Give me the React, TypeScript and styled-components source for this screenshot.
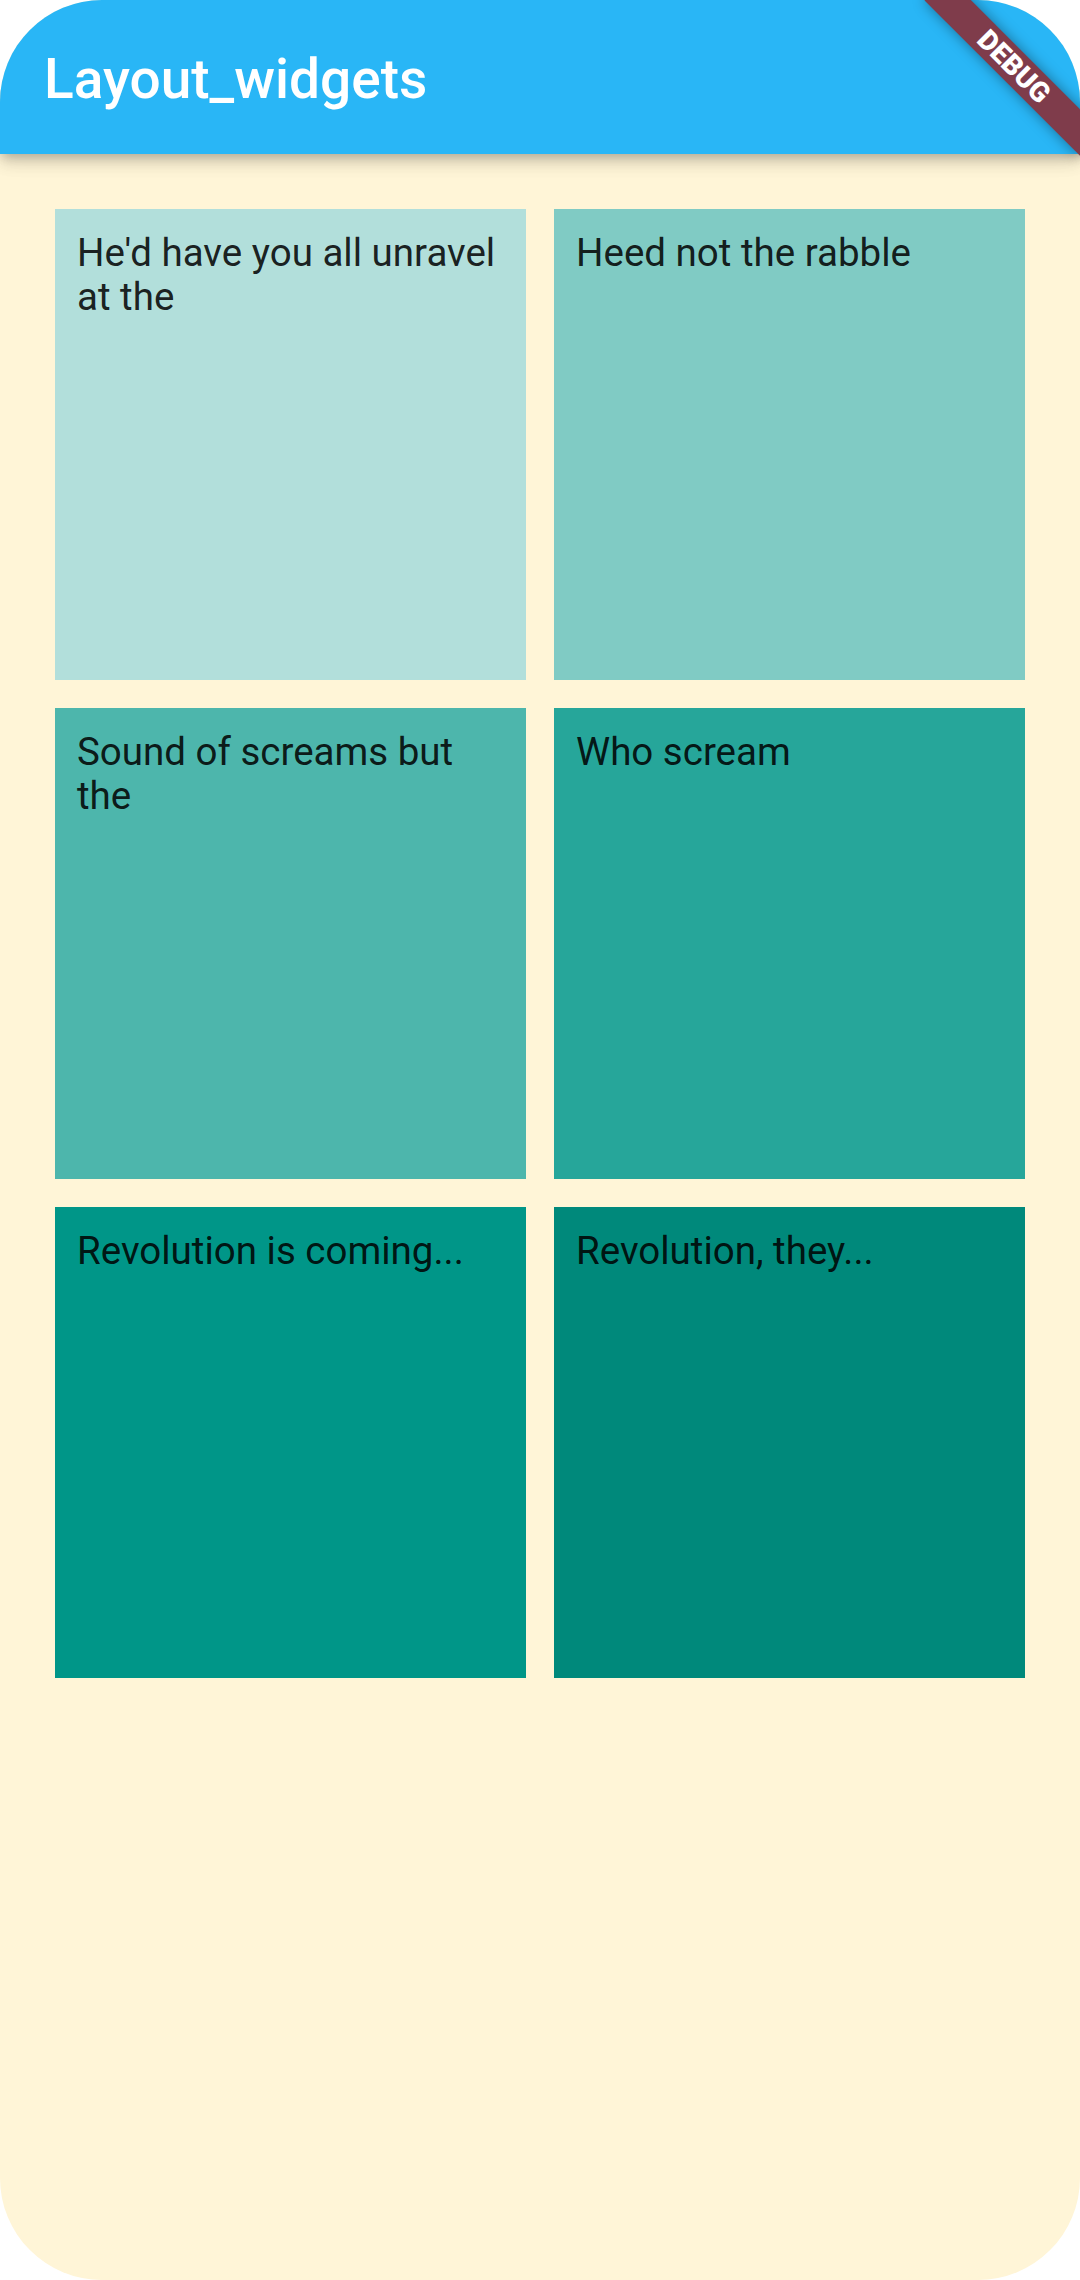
import React from "react";
import styled, { createGlobalStyle } from "styled-components";

const GlobalStyle = createGlobalStyle`
  html, body {
    margin: 0;
    padding: 0;
    background: #ffffff;
    overflow: hidden;
  }
  body {
    font-family: Roboto, "Noto Sans", "Liberation Sans", sans-serif;
  }
`;

const Screen = styled.div`
  position: relative;
  width: 1080px;
  height: 2280px;
  overflow: hidden;
`;

const Frame = styled.div`
  width: 1080px;
  height: 2280px;
  border-radius: 102px;
  overflow: hidden;
  background: #fff5d7;
  display: flex;
  flex-direction: column;
`;

const AppBar = styled.header`
  position: relative;
  z-index: 1;
  flex: 0 0 154px;
  height: 154px;
  background: #29b6f6;
  display: flex;
  align-items: center;
  padding: 4px 0 0 44px;
  box-sizing: border-box;
  box-shadow: 0 5px 10px -3px rgba(0, 0, 0, 0.2), 0 10px 14px 0 rgba(0, 0, 0, 0.1),
    0 3px 24px 0 rgba(0, 0, 0, 0.08);
`;

const Title = styled.h1`
  margin: 0;
  font-family: Roboto, "Noto Sans", sans-serif;
  font-weight: 500;
  font-size: 55px;
  color: #ffffff;
  letter-spacing: 0;
`;

const Grid = styled.main`
  display: grid;
  grid-template-columns: repeat(2, 1fr);
  gap: 28px;
  padding: 55px;
  align-content: start;
`;

const Tile = styled.div<{ $bg: string }>`
  aspect-ratio: 1 / 1;
  background: ${(p) => p.$bg};
  padding: 22px;
  box-sizing: border-box;
  font-family: Roboto, "Noto Sans", sans-serif;
  font-size: 38.5px;
  line-height: 44px;
  color: rgba(0, 0, 0, 0.87);
`;

const Banner = styled.div`
  position: absolute;
  left: 904px;
  top: 50px;
  width: 220px;
  height: 33px;
  transform: rotate(45deg);
  background: #7f3c4b;
  box-shadow: 0 0 14px rgba(0, 0, 0, 0.4);
  display: flex;
  align-items: center;
  justify-content: center;
  z-index: 5;
`;

const BannerText = styled.span`
  font-family: Roboto, "Noto Sans", sans-serif;
  font-weight: 900;
  font-size: 28px;
  line-height: 1;
  color: #ffffff;
`;

const tiles = [
  { text: "He'd have you all unravel at the", bg: "#b2dfdb" },
  { text: "Heed not the rabble", bg: "#80cbc4" },
  { text: "Sound of screams but the", bg: "#4db6ac" },
  { text: "Who scream", bg: "#26a69a" },
  { text: "Revolution is coming...", bg: "#009688" },
  { text: "Revolution, they...", bg: "#00897b" },
];

export default function App() {
  return (
    <>
      <GlobalStyle />
      <Screen>
        <Frame>
          <AppBar>
            <Title>Layout_widgets</Title>
          </AppBar>
          <Grid>
            {tiles.map((t) => (
              <Tile key={t.text} $bg={t.bg}>
                {t.text}
              </Tile>
            ))}
          </Grid>
        </Frame>
        <Banner>
          <BannerText>DEBUG</BannerText>
        </Banner>
      </Screen>
    </>
  );
}
